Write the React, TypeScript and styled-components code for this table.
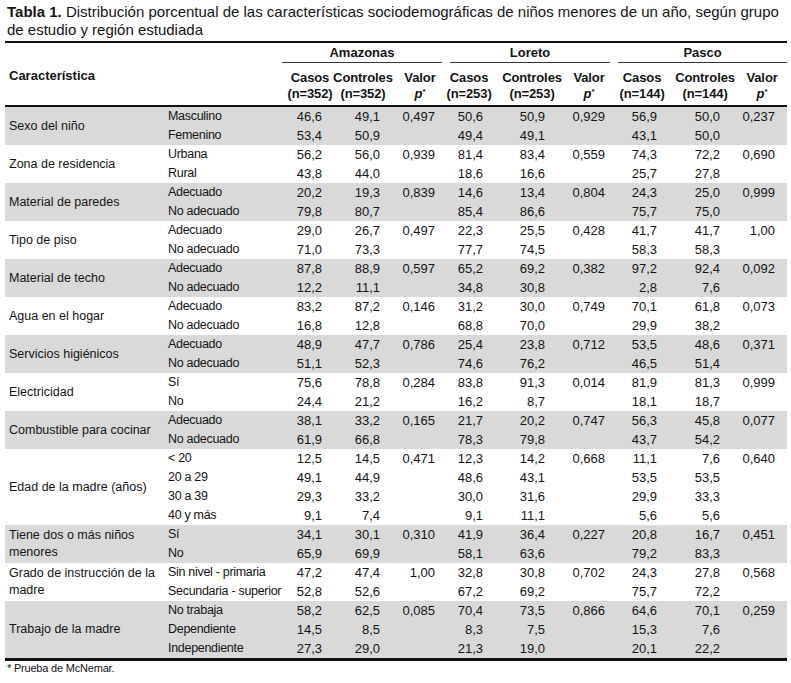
import React from "react";
import styled, { createGlobalStyle } from "styled-components";

const Global = createGlobalStyle`
  html, body { margin: 0; padding: 0; background: #fff; }
  body { font-family: "Liberation Sans", Arial, sans-serif; color: #141414; }
`;

const Page = styled.div`
  width: 791px;
  padding: 3px 4px 0 5px;
  box-sizing: border-box;
`;

const Title = styled.div`
  font-size: 15px;
  line-height: 18px;
  padding-left: 2px;
  margin-bottom: 2px;
`;

const TitleLine = styled.span`
  display: block;
  white-space: nowrap;
`;

const Table = styled.table`
  width: 782px;
  table-layout: fixed;
  border-collapse: collapse;
  border-top: 2px solid #111;
  border-bottom: 3px solid #111;
  font-size: 13px;
`;

const Col = styled.col<{ $w: number }>`
  width: ${(p) => p.$w}px;
`;

const Head = styled.thead`
  border-bottom: 2px solid #111;
`;

const GroupRow = styled.tr`
  height: 20px;
`;

const SubRow = styled.tr`
  height: 43px;
`;

const CharTh = styled.th`
  text-align: left;
  vertical-align: middle;
  padding: 2px 0 0 4px;
  font-weight: bold;
`;

const GroupTh = styled.th<{ $ml: number; $mr: number }>`
  padding: 0 ${(p) => p.$mr}px 0 ${(p) => p.$ml}px;
  vertical-align: top;
  font-weight: bold;
`;

const GroupLabel = styled.div`
  line-height: 19px;
  text-align: center;
  border-bottom: 1.5px solid #333;
`;

const SubTh = styled.th<{ $shift: number }>`
  padding: 0 0 3px ${(p) => p.$shift}px;
  vertical-align: bottom;
  font-weight: bold;
`;

const SubLabel = styled.div`
  display: flex;
  flex-direction: column;
  align-items: center;
  line-height: 16px;
  white-space: nowrap;
  letter-spacing: -0.1px;
`;

const Italic = styled.i`
  font-style: italic;
`;

const Sup = styled.sup`
  font-size: 8px;
  line-height: 0;
  vertical-align: 4px;
`;

const Group = styled.tbody<{ $shaded: boolean }>`
  background: ${(p) => (p.$shaded ? "#d9d9d9" : "#ffffff")};
`;

const Row = styled.tr`
  height: 19px;
`;

const LabelCell = styled.td`
  padding: 0 0 0 4px;
  vertical-align: middle;
  line-height: 17px;
  font-size: 12.5px;
`;

const CatCell = styled.td`
  padding: 0 0 0 3px;
  line-height: 19px;
  white-space: nowrap;
  font-size: 12.5px;
  letter-spacing: -0.3px;
`;

const NumCell = styled.td<{ $pr: number }>`
  padding: 0 ${(p) => p.$pr}px 0 0;
  text-align: right;
  line-height: 19px;
  white-space: nowrap;
`;

const Footnote = styled.div`
  font-size: 11px;
  line-height: 14px;
  padding-left: 2px;
  margin-top: 0;
  letter-spacing: -0.2px;
`;

const widths = [160, 117, 44, 58, 58, 45, 62, 63, 49, 63, 63];
const rightPad = [4, 4, 7, 4, 4, 7, 4, 4, 12];
const headShift = [12, 16, 14, 9, 28, 17, 11, 25, 13];

type Sub = { cat: string; v: string[] };
type G = { label: string; rows: Sub[] };

const r = (cat: string, s: string): Sub => {
  const parts = s.split(" ");
  let v: string[];
  if (parts.length === 9) v = parts;
  else v = [parts[0], parts[1], "", parts[2], parts[3], "", parts[4], parts[5], ""];
  return { cat, v };
};

const groups: G[] = [
  { label: "Sexo del niño", rows: [r("Masculino", "46,6 49,1 0,497 50,6 50,9 0,929 56,9 50,0 0,237"), r("Femenino", "53,4 50,9 49,4 49,1 43,1 50,0")] },
  { label: "Zona de residencia", rows: [r("Urbana", "56,2 56,0 0,939 81,4 83,4 0,559 74,3 72,2 0,690"), r("Rural", "43,8 44,0 18,6 16,6 25,7 27,8")] },
  { label: "Material de paredes", rows: [r("Adecuado", "20,2 19,3 0,839 14,6 13,4 0,804 24,3 25,0 0,999"), r("No adecuado", "79,8 80,7 85,4 86,6 75,7 75,0")] },
  { label: "Tipo de piso", rows: [r("Adecuado", "29,0 26,7 0,497 22,3 25,5 0,428 41,7 41,7 1,00"), r("No adecuado", "71,0 73,3 77,7 74,5 58,3 58,3")] },
  { label: "Material de techo", rows: [r("Adecuado", "87,8 88,9 0,597 65,2 69,2 0,382 97,2 92,4 0,092"), r("No adecuado", "12,2 11,1 34,8 30,8 2,8 7,6")] },
  { label: "Agua en el hogar", rows: [r("Adecuado", "83,2 87,2 0,146 31,2 30,0 0,749 70,1 61,8 0,073"), r("No adecuado", "16,8 12,8 68,8 70,0 29,9 38,2")] },
  { label: "Servicios higiénicos", rows: [r("Adecuado", "48,9 47,7 0,786 25,4 23,8 0,712 53,5 48,6 0,371"), r("No adecuado", "51,1 52,3 74,6 76,2 46,5 51,4")] },
  { label: "Electricidad", rows: [r("Sí", "75,6 78,8 0,284 83,8 91,3 0,014 81,9 81,3 0,999"), r("No", "24,4 21,2 16,2 8,7 18,1 18,7")] },
  { label: "Combustible para cocinar", rows: [r("Adecuado", "38,1 33,2 0,165 21,7 20,2 0,747 56,3 45,8 0,077"), r("No adecuado", "61,9 66,8 78,3 79,8 43,7 54,2")] },
  {
    label: "Edad de la madre (años)",
    rows: [
      r("< 20", "12,5 14,5 0,471 12,3 14,2 0,668 11,1 7,6 0,640"),
      r("20 a 29", "49,1 44,9 48,6 43,1 53,5 53,5"),
      r("30 a 39", "29,3 33,2 30,0 31,6 29,9 33,3"),
      r("40 y más", "9,1 7,4 9,1 11,1 5,6 5,6"),
    ],
  },
  { label: "Tiene dos o más niños menores", rows: [r("Sí", "34,1 30,1 0,310 41,9 36,4 0,227 20,8 16,7 0,451"), r("No", "65,9 69,9 58,1 63,6 79,2 83,3")] },
  { label: "Grado de instrucción de la madre", rows: [r("Sin nivel - primaria", "47,2 47,4 1,00 32,8 30,8 0,702 24,3 27,8 0,568"), r("Secundaria - superior", "52,8 52,6 67,2 69,2 75,7 72,2")] },
  {
    label: "Trabajo de la madre",
    rows: [
      r("No trabaja", "58,2 62,5 0,085 70,4 73,5 0,866 64,6 70,1 0,259"),
      r("Dependiente", "14,5 8,5 8,3 7,5 15,3 7,6"),
      r("Independiente", "27,3 29,0 21,3 19,0 20,1 22,2"),
    ],
  },
];

const regions = [
  { name: "Amazonas", n: "352", ml: 0, mr: 0 },
  { name: "Loreto", n: "253", ml: 8, mr: 2 },
  { name: "Pasco", n: "144", ml: 6, mr: 0 },
];

export default function App() {
  return (
    <Page>
      <Global />
      <Title>
        <TitleLine>
          <b>Tabla 1.</b> Distribución porcentual de las características sociodemográficas de niños menores de un año, según grupo
        </TitleLine>
        <TitleLine>de estudio y región estudiada</TitleLine>
      </Title>
      <Table>
        <colgroup>
          {widths.map((w, i) => (
            <Col key={i} $w={w} />
          ))}
        </colgroup>
        <Head>
          <GroupRow>
            <CharTh rowSpan={2} colSpan={2}>
              Característica
            </CharTh>
            {regions.map((g) => (
              <GroupTh key={g.name} colSpan={3} $ml={g.ml} $mr={g.mr}>
                <GroupLabel>{g.name}</GroupLabel>
              </GroupTh>
            ))}
          </GroupRow>
          <SubRow>
            {regions.map((g, gi) => (
              <React.Fragment key={g.name}>
                <SubTh $shift={headShift[gi * 3]}>
                  <SubLabel>
                    <span>Casos</span>
                    <span>(n={g.n})</span>
                  </SubLabel>
                </SubTh>
                <SubTh $shift={headShift[gi * 3 + 1]}>
                  <SubLabel>
                    <span>Controles</span>
                    <span>(n={g.n})</span>
                  </SubLabel>
                </SubTh>
                <SubTh $shift={headShift[gi * 3 + 2]}>
                  <SubLabel>
                    <span>Valor</span>
                    <span>
                      <Italic>p</Italic>
                      <Sup>*</Sup>
                    </span>
                  </SubLabel>
                </SubTh>
              </React.Fragment>
            ))}
          </SubRow>
        </Head>
        {groups.map((g, gi) => (
          <Group key={g.label} $shaded={gi % 2 === 0}>
            {g.rows.map((row, ri) => (
              <Row key={row.cat}>
                {ri === 0 && <LabelCell rowSpan={g.rows.length}>{g.label}</LabelCell>}
                <CatCell>{row.cat}</CatCell>
                {row.v.map((val, vi) => (
                  <NumCell key={vi} $pr={rightPad[vi]}>
                    {val}
                  </NumCell>
                ))}
              </Row>
            ))}
          </Group>
        ))}
      </Table>
      <Footnote>* Prueba de McNemar.</Footnote>
    </Page>
  );
}
